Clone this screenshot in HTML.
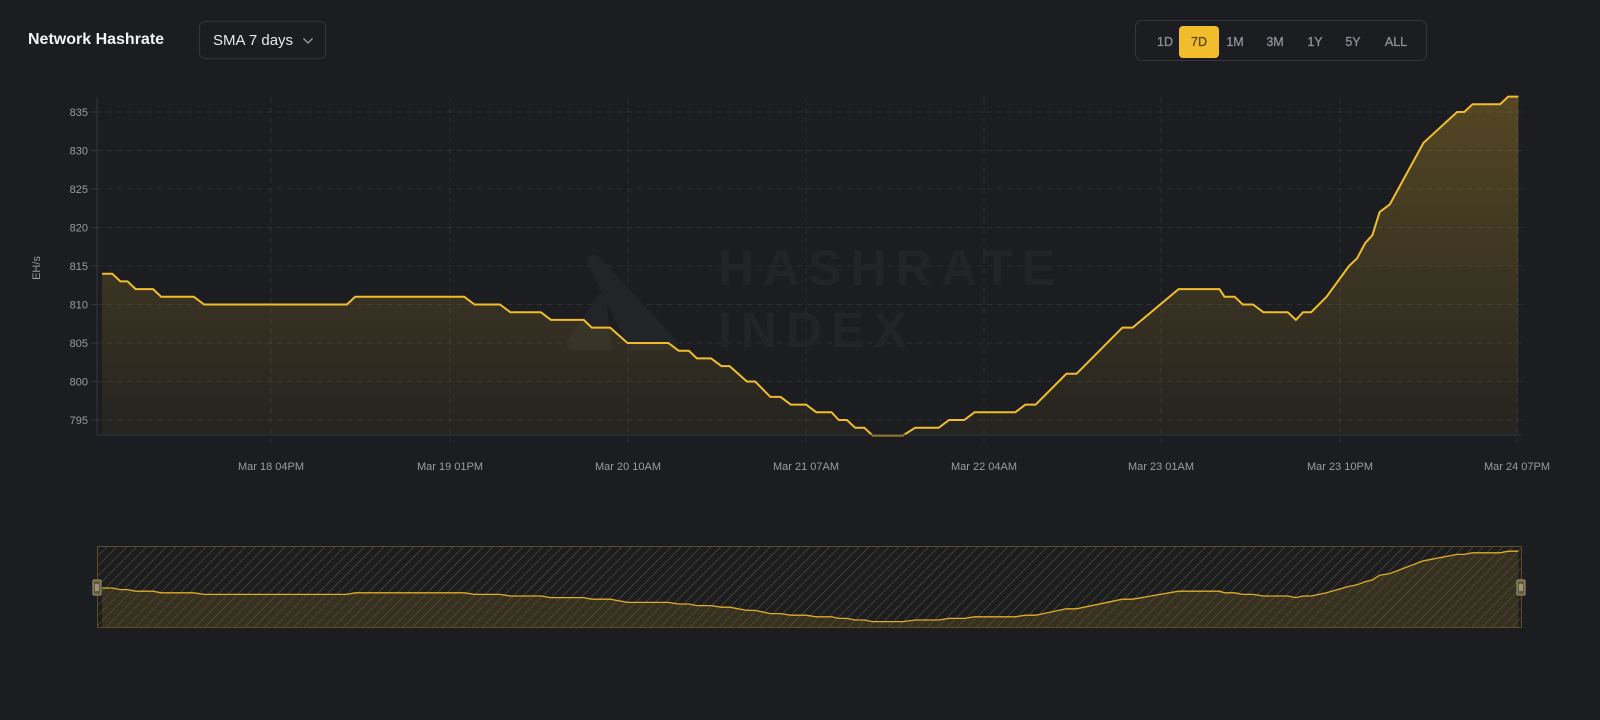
<!DOCTYPE html>
<html><head><meta charset="utf-8"><style>
html,body{margin:0;padding:0;background:#1c1d20;width:1600px;height:720px;overflow:hidden;font-family:"Liberation Sans",sans-serif}
.title{position:absolute;left:28px;top:31px;font-size:16px;font-weight:bold;color:#f2f2f2}
.dd{position:absolute;left:199px;top:21px;width:127px;height:38px;border:1px solid #34363b;border-radius:6px;box-sizing:border-box;color:#e8e8e8;font-size:15px;line-height:38px;padding-left:13px}
.dd svg{position:absolute;left:102px;top:15px}
.grp{position:absolute;left:1135px;top:20px;width:292px;height:41px;border:1px solid #34363b;border-radius:7px;box-sizing:border-box}
.b{position:absolute;top:5px;height:32px;line-height:32px;font-size:12.5px;color:#8e9096;text-align:center;-webkit-text-stroke:0.3px #8e9096}
.act{background:#f2bd2c;color:#5b4510;border-radius:4px;width:40px;-webkit-text-stroke:0.3px #5b4510}
</style></head><body>
<div class="title">Network Hashrate</div>
<div class="dd">SMA 7 days<svg width="12" height="8" viewBox="0 0 12 8"><path d="M1.5 1.5 L6 6 L10.5 1.5" fill="none" stroke="#9a9ca2" stroke-width="1.3"/></svg></div>
<div class="grp">
<div class="b" style="left:18px;width:22px">1D</div>
<div class="b act" style="left:43px">7D</div>
<div class="b" style="left:88px;width:22px">1M</div>
<div class="b" style="left:128px;width:22px">3M</div>
<div class="b" style="left:168px;width:22px">1Y</div>
<div class="b" style="left:206px;width:22px">5Y</div>
<div class="b" style="left:245px;width:30px">ALL</div>
</div>
<svg id="c" width="1600" height="720" style="position:absolute;left:0;top:0" xmlns="http://www.w3.org/2000/svg">
<defs>
<linearGradient id="g" x1="0" y1="0" x2="0" y2="1"><stop offset="0" stop-color="#f2bd2c" stop-opacity="0.26"/><stop offset="1" stop-color="#f2bd2c" stop-opacity="0.04"/></linearGradient>
<pattern id="h" width="7" height="7" patternUnits="userSpaceOnUse" patternTransform="rotate(45)"><line x1="0" y1="0" x2="0" y2="7" stroke="#5f532f" stroke-width="1.2"/></pattern>
</defs>
<g id="grid" stroke="#2e3034" stroke-width="1" stroke-dasharray="5,5"></g>
<g fill="#232427" font-weight="bold" font-size="50" letter-spacing="9">
<text x="718" y="285">HASHRATE</text>
<text x="718" y="347">INDEX</text>
</g>
<path d="M586 260 Q590 252 598 256 L675 338 Q680 348 670 350 L630 350 Z" fill="#232427"/>
<path d="M568 340 L597 296 Q602 290 606 298 L612 350 L572 350 Q563 348 568 340Z" fill="#232427"/>
<path id="area" fill="url(#g)"/>
<path id="line" fill="none" stroke="#f2bd2c" stroke-width="2" stroke-linejoin="round"/>
<line x1="97" y1="98" x2="97" y2="435" stroke="#35373c"/>
<line x1="97" y1="435" x2="1522" y2="435" stroke="#35373c"/>
<g id="yl" fill="#9a9ca2" font-size="11" text-anchor="end"></g>
<g id="xl" fill="#9a9ca2" font-size="11" text-anchor="middle"></g>
<text x="40" y="268" fill="#9a9ca2" font-size="11" transform="rotate(-90 40 268)" text-anchor="middle">EH/s</text>
<rect x="97" y="546" width="1425" height="82" fill="#1c1d20"/>
<path id="narea" fill="#f2bd2c" fill-opacity="0.13"/>
<rect x="97" y="546" width="1425" height="82" fill="url(#h)"/>
<path id="nline" fill="none" stroke="#e0ad28" stroke-width="1.3"/>
<rect x="97.5" y="546.5" width="1424" height="81" fill="none" stroke="#5a4d27"/>
<rect x="93" y="580" width="8" height="15" rx="1" fill="#6b5a2c" stroke="#999" stroke-width="1"/>
<line x1="96" y1="584" x2="96" y2="591" stroke="#ccc"/><line x1="98" y1="584" x2="98" y2="591" stroke="#ccc"/>
<rect x="1517" y="580" width="8" height="15" rx="1" fill="#6b5a2c" stroke="#999" stroke-width="1"/>
<line x1="1520" y1="584" x2="1520" y2="591" stroke="#ccc"/><line x1="1522" y1="584" x2="1522" y2="591" stroke="#ccc"/>
</svg>
<script>
var d=[100,814,110,814,118,813,125,813,133,812,150,812,158,811,190,811,200,810,340,810,348,811,455,811,465,810,490,810,500,809,530,809,540,808,572,808,580,807,598,807,615,805,655,805,665,804,675,804,683,803,697,803,707,802,715,802,732,800,740,800,755,798,765,798,775,797,790,797,800,796,815,796,822,795,830,795,838,794,847,794,855,793,885,793,897,794,920,794,930,795,945,795,955,796,995,796,1005,797,1015,797,1045,801,1055,801,1100,807,1110,807,1155,812,1195,812,1200,811,1210,811,1218,810,1228,810,1238,809,1262,809,1270,808,1277,809,1285,809,1300,811,1322,815,1330,816,1338,818,1345,819,1352,822,1362,823,1395,831,1428,835,1435,835,1443,836,1470,836,1478,837,1488,837];
var p="",np="",k=1.0204;
for(var i=0;i<d.length;i+=2){var x=(d[i]*k).toFixed(1),v=d[i+1];
var y=(266+(815-v)*7.7).toFixed(1),ny=(588+(814-v)*1.6).toFixed(1);
p+=(i?"L":"M")+x+" "+y;np+=(i?"L":"M")+x+" "+ny;}
var x0=(100*k).toFixed(1),x1=(1488*k).toFixed(1);
document.getElementById('line').setAttribute('d',p);
document.getElementById('area').setAttribute('d',p+"L"+x1+" 435L"+x0+" 435Z");
document.getElementById('nline').setAttribute('d',np);
document.getElementById('narea').setAttribute('d',np+"L"+x1+" 628L"+x0+" 628Z");
var ns="http://www.w3.org/2000/svg";
function el(t,a,par,txt){var e=document.createElementNS(ns,t);for(var q in a)e.setAttribute(q,a[q]);if(txt)e.textContent=txt;document.getElementById(par).appendChild(e);}
for(var v=795;v<=835;v+=5){var y=266+(815-v)*7.7;el('line',{x1:97,x2:1522,y1:y,y2:y},'grid');el('line',{x1:91,x2:97,y1:y,y2:y,stroke:'#35373c','stroke-dasharray':'0'},'grid');el('text',{x:88,y:y+4},'yl',String(v));}
var xs=[271,450,628,806,984,1161,1340,1517],lb=["Mar 18 04PM","Mar 19 01PM","Mar 20 10AM","Mar 21 07AM","Mar 22 04AM","Mar 23 01AM","Mar 23 10PM","Mar 24 07PM"];
for(var j=0;j<xs.length;j++){el('line',{x1:xs[j],x2:xs[j],y1:98,y2:443},'grid');el('text',{x:xs[j],y:470},'xl',lb[j]);}
</script>
</body></html>
